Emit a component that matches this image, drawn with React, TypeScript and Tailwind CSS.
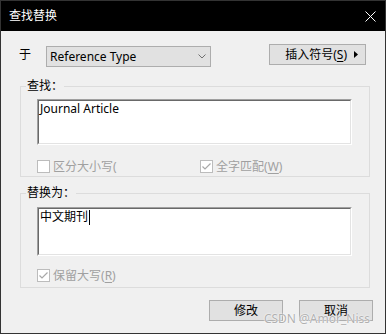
import { ReactNode } from 'react'

const font = "font-['Segoe_UI','Noto_Sans','Noto_Sans_CJK_SC',sans-serif]"

function Sunken({ h, children }: { h: string; children?: ReactNode }) {
  return (
    <div className={`w-[315px] ${h} border border-t-[#a0a0a0] border-l-[#a0a0a0] border-r-white border-b-white`}>
      <div className="h-full border border-t-[#696969] border-l-[#696969] border-r-[#e3e3e3] border-b-[#e3e3e3] bg-white px-[1px] text-[12px] leading-[16px] text-black">
        {children}
      </div>
    </div>
  )
}

function CheckBox({ checked, label, hot }: { checked: boolean; label: string; hot?: string }) {
  return (
    <div className="flex h-[13px] items-center gap-[3px]">
      <svg width="13" height="13" viewBox="0 0 13 13" className="shrink-0">
        <rect x="0.5" y="0.5" width="12" height="12" fill="#fff" stroke="#bcbcbc" />
        {checked && <path d="M2.5 6.5 L5 9 L10.5 3.5" fill="none" stroke="#a8a8a8" strokeWidth="1.2" />}
      </svg>
      <span className="text-[12px] leading-[16px] text-[#a0a0a0] whitespace-nowrap">
        {label}
        {hot && (
          <>
            (<span className="underline underline-offset-2">{hot}</span>)
          </>
        )}
      </span>
    </div>
  )
}

function Group({ title, children, top, pb }: { title: string; children: ReactNode; top: string; pb: string }) {
  return (
    <div className={`relative ml-[19px] w-[350px] border border-[#dcdcdc] ${top} ${pb} pl-[16px]`}>
      <span className="absolute left-[5px] top-[-9px] bg-[#f0f0f0] px-[1px] text-[12px] leading-[16px] text-black">
        {title}
      </span>
      {children}
    </div>
  )
}

export default function App() {
  return (
    <div className={`relative flex h-[334px] w-[386px] flex-col border border-[#333] bg-[#f0f0f0] ${font}`}>
      <div className="flex h-[30px] items-center justify-between bg-black pl-[8px] pr-[9px] text-white">
        <span className="text-[12px] leading-[16px]">查找替换</span>
        <svg width="11" height="11" viewBox="0 0 11 11">
          <path d="M0.5 0.5 L10.5 10.5 M10.5 0.5 L0.5 10.5" stroke="#fff" strokeWidth="1" />
        </svg>
      </div>

      <div className="mt-[13px] flex h-[22px] items-start">
        <span className="ml-[18px] mt-[3px] text-[12px] leading-[16px] text-black">于</span>
        <div className="ml-[15px] mt-[2px] flex h-[21px] w-[165px] items-center justify-between border border-[#adadad] bg-[#e1e1e1] pl-[3px] pr-[4px] text-[12px] text-black">
          <span className="leading-[16px]">Reference Type</span>
          <svg width="8" height="5" viewBox="0 0 8 5">
            <path d="M0.5 0.5 L4 4 L7.5 0.5" fill="none" stroke="#707070" strokeWidth="1" />
          </svg>
        </div>
        <div className="ml-auto mr-[19px] flex h-[21px] w-[97px] items-center justify-end gap-[7px] border border-[#adadad] bg-[#e1e1e1] pr-[7px] text-[12px] text-black">
          <span className="leading-[16px]">
            插入符号(<span className="underline underline-offset-2">S</span>)
          </span>
          <svg width="4" height="7" viewBox="0 0 4 7">
            <path d="M0 0 L4 3.5 L0 7 Z" fill="#000" />
          </svg>
        </div>
      </div>

      <Group title="查找：" top="mt-[20px] pt-[12px]" pb="pb-[3px]">
        <Sunken h="h-[46px]">Journal Article</Sunken>
        <div className="mt-[15px] flex">
          <div className="w-[163px]">
            <CheckBox checked={false} label="区分大小写(" />
          </div>
          <CheckBox checked label="全字匹配" hot="W" />
        </div>
      </Group>

      <Group title="替换为：" top="mt-[16px] pt-[13px]" pb="pb-[5px]">
        <Sunken h="h-[49px]">
          <span className="inline-flex items-center">
            中文期刊
            <span className="ml-[1px] inline-block h-[15px] w-[1px] bg-black" />
          </span>
        </Sunken>
        <div className="mt-[13px]">
          <CheckBox checked label="保留大写" hot="R" />
        </div>
      </Group>

      <div className="mt-[12px] flex justify-end gap-[16px] pr-[12px]">
        <button className="h-[21px] w-[74px] border border-[#adadad] bg-[#e1e1e1] text-[12px] leading-[16px] text-black">修改</button>
        <button className="h-[21px] w-[74px] border border-[#adadad] bg-[#e1e1e1] text-[12px] leading-[16px] text-black">取消</button>
      </div>

      <span className="absolute bottom-[7px] right-[15px] text-[12px] leading-[14px] text-[#b0b0b0] [text-shadow:0_0_2px_#fff,0_0_1px_#fff]">
        CSDN @Amor_Niss
      </span>
    </div>
  )
}
